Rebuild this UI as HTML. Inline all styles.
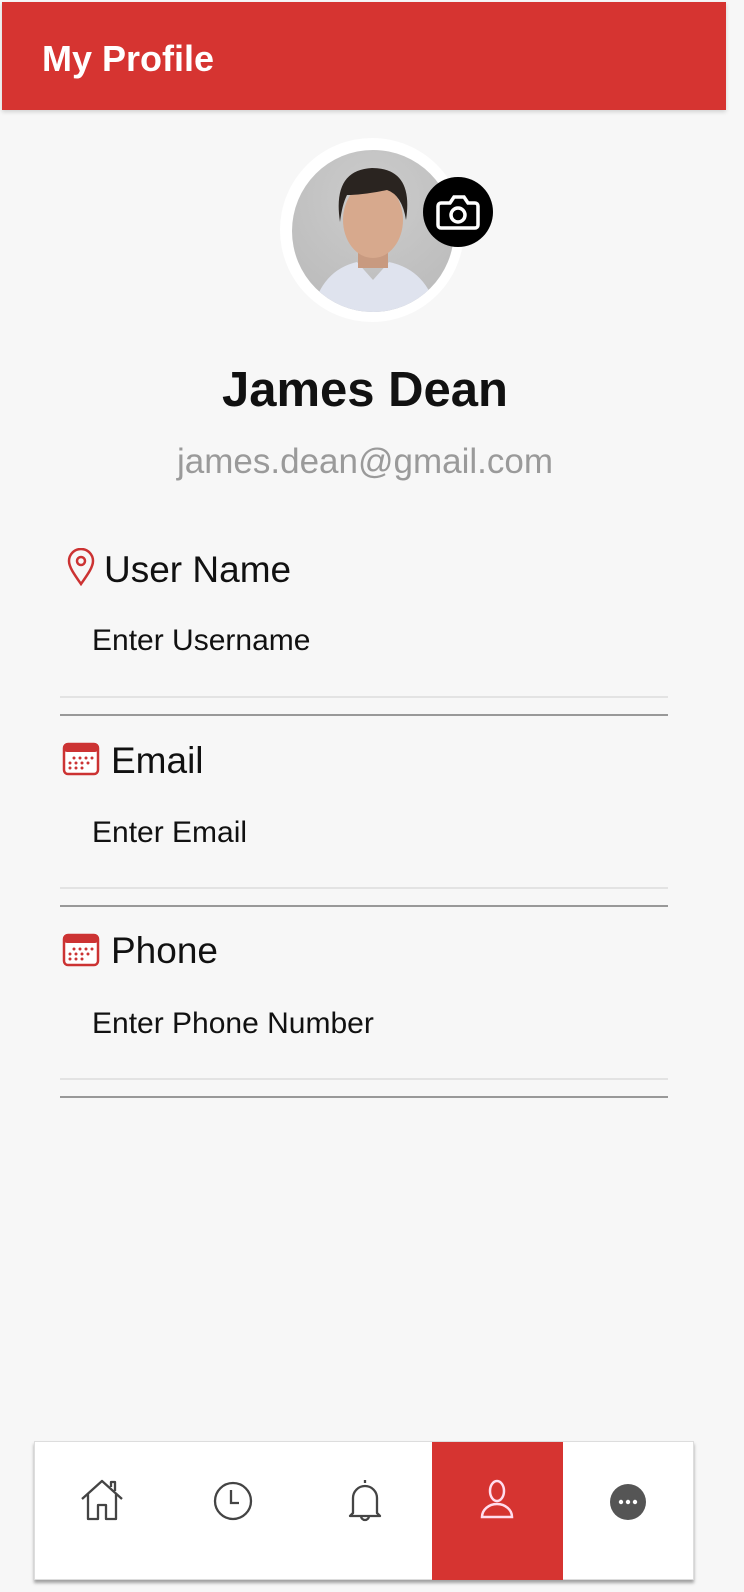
<!DOCTYPE html>
<html><head><meta charset="utf-8"><style>
body{margin:0;width:744px;height:1592px;background:#f7f7f7;font-family:"Liberation Sans",sans-serif;position:relative;overflow:hidden}
.hdr{position:absolute;left:2px;top:2px;width:724px;height:108px;background:#d63431;box-shadow:0 2px 4px rgba(0,0,0,.15)}
.hdr span{position:absolute;left:40px;top:36px;color:#fff;font-size:36px;font-weight:bold}
.ring{position:absolute;left:280px;top:138px;width:184px;height:184px;border-radius:50%;background:#fff}
.photo{position:absolute;left:292px;top:150px;width:162px;height:162px;border-radius:50%;background:radial-gradient(circle at 50% 30%,#ccc,#b8b8b8);overflow:hidden}
.cam{position:absolute;left:423px;top:177px;width:70px;height:70px;border-radius:50%;background:#000}
.name{position:absolute;left:0;width:730px;top:362px;text-align:center;font-size:49px;font-weight:bold;color:#111}
.mail{position:absolute;left:0;width:730px;top:442px;text-align:center;font-size:35px;color:#9a9a9a}
.lbl{position:absolute;font-size:37px;color:#111}
.ph{position:absolute;left:92px;font-size:30px;color:#111}
.l1{position:absolute;left:60px;width:608px;height:2px;background:#e3e3e3}
.l2{position:absolute;left:60px;width:608px;height:2px;background:#999}
.nav{position:absolute;left:34px;top:1441px;width:660px;height:139px;background:#fff;box-shadow:0 3px 3px rgba(0,0,0,.35);border:1px solid #ddd;box-sizing:border-box}
.act{position:absolute;left:397px;top:0;width:131px;height:138px;background:#d63431}
.nav svg{position:absolute;top:35px}
</style></head><body>
<div class="hdr"><span>My Profile</span></div>
<div class="ring"></div>
<div class="photo">
<svg width="162" height="162" viewBox="0 0 162 162"><path d="M20 162 Q30 120 65 112 L81 130 L97 112 Q135 120 145 162Z" fill="#dfe3ee"/><rect x="66" y="88" width="30" height="30" fill="#c89a80"/><ellipse cx="81" cy="70" rx="30" ry="38" fill="#d7a98d"/><path d="M48 72 Q40 20 80 18 Q122 18 114 70 Q110 45 95 40 Q70 45 55 45 Q50 55 48 72Z" fill="#2a2420"/></svg>
</div>
<div class="cam"><svg width="70" height="70" viewBox="0 0 70 70"><path d="M18 26h9l4-6h10l4 6h7a3 3 0 0 1 3 3v19a3 3 0 0 1-3 3H18a3 3 0 0 1-3-3V29a3 3 0 0 1 3-3z" fill="none" stroke="#fff" stroke-width="3.5"/><circle cx="35" cy="38" r="7" fill="none" stroke="#fff" stroke-width="3.5"/></svg></div>
<div class="name">James Dean</div>
<div class="mail">james.dean@gmail.com</div>

<svg style="position:absolute;left:66px;top:548px" width="30" height="38" viewBox="0 0 30 38"><path d="M15 36C8 26 3 19 3 13a12 12 0 0 1 24 0c0 6-5 13-12 23z" fill="none" stroke="#c33" stroke-width="2.5"/><circle cx="15" cy="13" r="4" fill="none" stroke="#c33" stroke-width="2.5"/></svg>
<div class="lbl" style="left:104px;top:549px">User Name</div>
<div class="ph" style="top:624px">Enter Username</div>
<div class="l1" style="top:696px"></div><div class="l2" style="top:714px"></div>

<svg style="position:absolute;left:62px;top:740px" width="38" height="36" viewBox="0 0 38 36"><rect x="2" y="4" width="34" height="30" rx="4" fill="#fff" stroke="#c33" stroke-width="2.5"/><rect x="2" y="4" width="34" height="8" rx="3" fill="#c33"/><g fill="#c33"><circle cx="12" cy="18" r="1.5"/><circle cx="18" cy="18" r="1.5"/><circle cx="24" cy="18" r="1.5"/><circle cx="30" cy="18" r="1.5"/><circle cx="8" cy="23" r="1.5"/><circle cx="14" cy="23" r="1.5"/><circle cx="20" cy="23" r="1.5"/><circle cx="26" cy="23" r="1.5"/><circle cx="8" cy="28" r="1.5"/><circle cx="14" cy="28" r="1.5"/><circle cx="20" cy="28" r="1.5"/></g></svg>
<div class="lbl" style="left:111px;top:740px">Email</div>
<div class="ph" style="top:816px">Enter Email</div>
<div class="l1" style="top:887px"></div><div class="l2" style="top:905px"></div>

<svg style="position:absolute;left:62px;top:931px" width="38" height="36" viewBox="0 0 38 36"><rect x="2" y="4" width="34" height="30" rx="4" fill="#fff" stroke="#c33" stroke-width="2.5"/><rect x="2" y="4" width="34" height="8" rx="3" fill="#c33"/><g fill="#c33"><circle cx="12" cy="18" r="1.5"/><circle cx="18" cy="18" r="1.5"/><circle cx="24" cy="18" r="1.5"/><circle cx="30" cy="18" r="1.5"/><circle cx="8" cy="23" r="1.5"/><circle cx="14" cy="23" r="1.5"/><circle cx="20" cy="23" r="1.5"/><circle cx="26" cy="23" r="1.5"/><circle cx="8" cy="28" r="1.5"/><circle cx="14" cy="28" r="1.5"/><circle cx="20" cy="28" r="1.5"/></g></svg>
<div class="lbl" style="left:111px;top:930px">Phone</div>
<div class="ph" style="top:1007px">Enter Phone Number</div>
<div class="l1" style="top:1078px"></div><div class="l2" style="top:1096px"></div>

<div class="nav">
<div class="act"></div>
<svg style="left:44px" width="46" height="46" viewBox="0 0 46 46"><path d="M3 22L23 4l20 18M9 17v25h10V28h8v14h10V17M32 10V5h4v9" fill="none" stroke="#444" stroke-width="2.3" stroke-linejoin="round"/></svg>
<svg style="left:178px" width="40" height="46" viewBox="0 0 40 46"><circle cx="20" cy="24" r="18" fill="none" stroke="#444" stroke-width="2.3"/><path d="M18 13v13h8" fill="none" stroke="#444" stroke-width="2.3"/></svg>
<svg style="left:310px" width="40" height="46" viewBox="0 0 40 46"><path d="M20 3v3M8 36V21a12 12 0 0 1 24 0v15l3 3H5zM16 39a4 4 0 0 0 8 0" fill="none" stroke="#444" stroke-width="2.3" stroke-linejoin="round"/></svg>
<svg style="left:442px" width="40" height="46" viewBox="0 0 40 46"><ellipse cx="20" cy="14" rx="7" ry="10" fill="none" stroke="#fde" stroke-width="2.5"/><path d="M5 40a15 13 0 0 1 30 0z" fill="none" stroke="#fde" stroke-width="2.5"/></svg>
<svg style="left:573px;top:41px" width="40" height="46" viewBox="0 0 40 46"><circle cx="20" cy="19" r="18" fill="#555"/><g fill="#fff"><circle cx="13" cy="19" r="2.2"/><circle cx="20" cy="19" r="2.2"/><circle cx="27" cy="19" r="2.2"/></g></svg>
</div>
</body></html>
